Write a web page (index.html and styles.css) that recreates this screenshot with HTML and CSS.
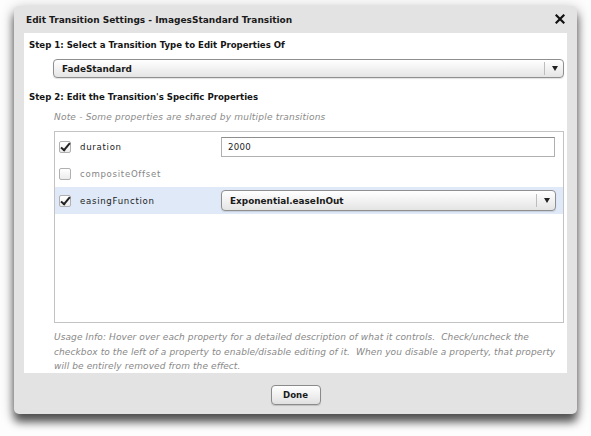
FILE: index.html
```html
<!DOCTYPE html>
<html lang="en">
<head>
  <meta charset="UTF-8" />
  <title>Edit Transition Settings</title>
  <link rel="stylesheet" href="styles.css">
</head>
<body>
  <div class="dialog">
    <div class="titlebar">
      <span class="title">Edit Transition Settings - ImagesStandard Transition</span>
      <svg class="close" width="10" height="10" viewBox="0 0 10 10">
        <path d="M1.5 1.5 L8.5 8.5 M8.5 1.5 L1.5 8.5" stroke="#111" stroke-width="2.2" stroke-linecap="square"/>
      </svg>
    </div>

    <div class="content">
      <h2 class="step">Step 1: Select a Transition Type to Edit Properties Of</h2>
      <div class="select type-select">
        <span class="select-value">FadeStandard</span>
        <span class="select-arrow"></span>
      </div>

      <h2 class="step step-two">Step 2: Edit the Transition's Specific Properties</h2>
      <p class="note">Note - Some properties are shared by multiple transitions</p>

      <div class="props">
        <div class="prop">
          <span class="check checked"></span>
          <span class="prop-name">duration</span>
          <div class="text-input">2000</div>
        </div>
        <div class="prop disabled">
          <span class="check"></span>
          <span class="prop-name">compositeOffset</span>
        </div>
        <div class="prop active">
          <span class="check checked"></span>
          <span class="prop-name">easingFunction</span>
          <div class="select prop-select">
            <span class="select-value">Exponential.easeInOut</span>
            <span class="select-arrow"></span>
          </div>
        </div>
      </div>

      <p class="usage">Usage Info: Hover over each property for a detailed description of what it controls.&nbsp; Check/uncheck the checkbox to the left of a property to enable/disable editing of it.&nbsp; When you disable a property, that property will be entirely removed from the effect.</p>
    </div>

    <div class="footer">
      <button class="done-btn">Done</button>
    </div>
  </div>
</body>
</html>
```

FILE: styles.css
```css
* {
  margin: 0;
  padding: 0;
  box-sizing: border-box;
}

body {
  background: #fdfdfd;
  font-family: 'DejaVu Sans', Verdana, sans-serif;
  color: #1b1b1b;
  padding: 6px 0 0 14px;
  width: 591px;
  height: 436px;
  overflow: hidden;
}

.dialog {
  width: 563px;
  height: 408px;
  background: #e3e3e3;
  border-radius: 5px;
  box-shadow: 0 8px 8px rgba(0,0,0,0.6), 0 3px 14px rgba(0,0,0,0.3);
  display: flex;
  flex-direction: column;
}

.titlebar {
  height: 27px;
  display: flex;
  align-items: center;
  justify-content: space-between;
  padding: 0 12px 0 12px;
}
.title {
  font-size: 9px;
  font-weight: bold;
  color: #1a1a1a;
}
.close {
  margin-top: -1px;
}

.content {
  background: #fff;
  margin: 0 10px;
  height: 340px;
  padding: 6px 3px 0 5px;
}

.step {
  font-size: 8.6px;
  font-weight: bold;
  color: #151515;
  line-height: 12px;
}
.step-two {
  margin-top: 13px;
}

.select {
  height: 19px;
  border: 1px solid #8f8f8f;
  border-radius: 4px;
  background: linear-gradient(#ffffff, #f2f2f2 50%, #e4e4e4);
  box-shadow: 0 1px 1px rgba(0,0,0,0.12);
  display: flex;
  align-items: center;
}
.select-value {
  flex: 1;
  font-size: 8.9px;
  font-weight: bold;
  padding-left: 8px;
  color: #1a1a1a;
}
.select-arrow {
  width: 19px;
  height: 13px;
  border-left: 1px solid #bdbdbd;
  position: relative;
}
.select-arrow::after {
  content: '';
  position: absolute;
  left: 7px;
  top: 4px;
  border-left: 3px solid transparent;
  border-right: 3px solid transparent;
  border-top: 5px solid #222;
}

.type-select {
  margin: 8px 0 0 24px;
}

.note {
  font-size: 9px;
  letter-spacing: 0.2px;
  font-style: italic;
  color: #8a8a8a;
  margin: 8px 0 0 25px;
  line-height: 12px;
}

.props {
  margin: 8px 0 0 25px;
  height: 192px;
  border: 1px solid #c3c3c3;
  padding-top: 1px;
}

.prop {
  height: 27px;
  display: flex;
  align-items: center;
  padding-left: 4px;
}
.prop.active {
  background: #dfe9f7;
}

.check {
  width: 12px;
  height: 12px;
  border: 1px solid #b0b0b0;
  border-radius: 2px;
  background: linear-gradient(#ffffff, #ececec);
  position: relative;
}
.check.checked::after {
  content: '';
  position: absolute;
  left: 3px;
  top: -1px;
  width: 3px;
  height: 8px;
  border-right: 2px solid #222;
  border-bottom: 2px solid #222;
  transform: rotate(40deg);
}

.prop-name {
  width: 150px;
  font-size: 8.6px;
  letter-spacing: 0.7px;
  padding-left: 9px;
  color: #1c1c1c;
}
.disabled .prop-name {
  color: #858585;
}

.text-input {
  width: 334px;
  height: 20px;
  border: 1px solid #b0b0b0;
  border-top-color: #8e8e8e;
  font-size: 8.6px;
  padding: 4px 6px;
  color: #1c1c1c;
  letter-spacing: 0.3px;
}

.prop-select {
  width: 335px;
  height: 21px;
}

.usage {
  margin: 7px 0 0 25px;
  font-size: 9px;
  letter-spacing: 0.1px;
  font-style: italic;
  color: #888;
  line-height: 14.6px;
}

.footer {
  flex: 1;
  display: flex;
  justify-content: center;
  padding-top: 12px;
}

.done-btn {
  width: 50px;
  height: 20px;
  border: 1px solid #8a8a8a;
  border-radius: 4px;
  background: linear-gradient(#ffffff, #f0f0f0 50%, #e0e0e0);
  box-shadow: 0 1px 1px rgba(0,0,0,0.15);
  font-family: 'DejaVu Sans', Verdana, sans-serif;
  font-size: 8.6px;
  font-weight: bold;
  color: #1a1a1a;
}
```
